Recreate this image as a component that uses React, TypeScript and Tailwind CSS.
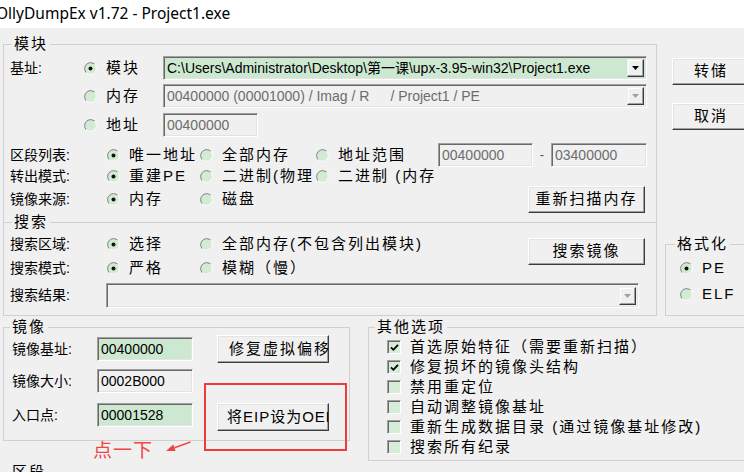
import React from 'react';

const font = "font-['Liberation_Sans','Noto_Sans_CJK_SC',sans-serif]";

function Radio({ on }: { on?: boolean }) {
  return (
    <svg width="13" height="13" viewBox="0 0 13 13" className="shrink-0">
      <circle cx="6.5" cy="6.5" r="6" fill="#d3ead3" />
      <path d="M2.26 10.74A6 6 0 0 1 10.74 2.26" fill="none" stroke="#808080" />
      <path d="M10.74 2.26A6 6 0 0 1 2.26 10.74" fill="none" stroke="#ffffff" />
      {on && <circle cx="6.5" cy="6.5" r="2" fill="#111" />}
    </svg>
  );
}

function Check({ on }: { on?: boolean }) {
  return (
    <span className="w-[14px] h-[14px] shrink-0 bg-[#d6ecd6] border border-t-[#a0a0a0] border-l-[#a0a0a0] border-r-white border-b-white shadow-[inset_1px_1px_0_#696969] flex items-center justify-center">
      {on && (
        <svg width="9" height="9" viewBox="0 0 9 9">
          <path d="M1 4.3L3.4 6.8L8 1.8" stroke="#000" strokeWidth="1.8" fill="none" />
        </svg>
      )}
    </span>
  );
}

function Group({ title, ml = 'ml-[8px]', className = '', children }: { title: string; ml?: string; className?: string; children?: React.ReactNode }) {
  return (
    <div className={`border border-[#d0d0d0] flex flex-col shrink-0 ${className}`}>
      <div className="h-0 flex">
        <span className={`${ml} -mt-[10px] h-[18px] px-[2px] bg-[#f0f0f0] text-[15px] leading-[18px] tracking-[2px]`}>{title}</span>
      </div>
      {children}
    </div>
  );
}

function Btn({ className = '', left, children }: { className?: string; left?: boolean; children: React.ReactNode }) {
  return (
    <div
      className={`flex items-center shrink-0 bg-[#f0f0f0] border border-t-white border-l-white border-r-[#3c3c3c] border-b-[#3c3c3c] shadow-[inset_-1px_-1px_0_#a0a0a0,inset_1px_1px_0_#e3e3e3] overflow-hidden whitespace-nowrap text-[15px] tracking-[2px] ${left ? 'pl-[11px]' : 'justify-center'} ${className}`}
    >
      {children}
    </div>
  );
}

function Field({ className = '', bg = 'bg-[#f0f0f0]', gray, children }: { className?: string; bg?: string; gray?: boolean; children?: React.ReactNode }) {
  return (
    <div
      className={`flex items-center shrink-0 border border-t-[#a0a0a0] border-l-[#a0a0a0] border-b-white border-r-white shadow-[inset_1px_1px_0_#696969,inset_-1px_-1px_0_#e3e3e3] pl-[3px] text-[14px] whitespace-nowrap overflow-hidden ${bg} ${gray ? 'text-[#6d6d6d]' : 'text-black'} ${className}`}
    >
      {children}
    </div>
  );
}

function DropBtn({ disabled }: { disabled?: boolean }) {
  return (
    <span className="ml-auto mr-[2px] w-[17px] h-[18px] shrink-0 flex items-center justify-center bg-[#f0f0f0] border border-t-[#f0f0f0] border-l-[#f0f0f0] border-r-[#3c3c3c] border-b-[#3c3c3c] shadow-[inset_-1px_-1px_0_#a0a0a0,inset_1px_1px_0_#fff]">
      <svg width="7" height="4" viewBox="0 0 7 4">
        <path d="M0 0H7L3.5 4Z" fill={disabled ? '#a0a0a0' : '#000'} />
      </svg>
    </span>
  );
}

function RadioItem({ on, w, children }: { on?: boolean; w: string; children: React.ReactNode }) {
  return (
    <div className={`flex items-center shrink-0 overflow-hidden whitespace-nowrap ${w}`}>
      <Radio on={on} />
      <span className="ml-[9px] text-[15px] tracking-[2px]">{children}</span>
    </div>
  );
}

function Label({ w, children }: { w: string; children: React.ReactNode }) {
  return <span className={`shrink-0 text-[14px] whitespace-nowrap ${w}`}>{children}</span>;
}

const options = [
  { on: true, text: '首选原始特征（需要重新扫描）' },
  { on: true, text: '修复损坏的镜像头结构' },
  { on: false, text: '禁用重定位' },
  { on: false, text: '自动调整镜像基址' },
  { on: false, text: '重新生成数据目录 (通过镜像基址修改)' },
  { on: false, text: '搜索所有纪录' },
];

export default function App() {
  return (
    <div className={`w-[744px] h-[472px] overflow-hidden bg-[#f0f0f0] text-black ${font}`}>
      <div className="h-[28px] bg-white flex items-center">
        <span className="-ml-[4px] text-[15.5px] font-['Noto_Sans',sans-serif]">OllyDumpEx v1.72 - Project1.exe</span>
      </div>

      <div className="pl-[3px] pt-[16px]">
        <div className="flex">
          <div className="w-[654px] shrink-0 flex flex-col">
            <Group title="模块" className="h-[178px] border-b-0">
              <div className="flex items-center h-[24px] mt-[11px] pl-[6px]">
                <Label w="w-[74px]">基址:</Label>
                <RadioItem on w="w-[79px]">模块</RadioItem>
                <Field bg="bg-[#cde8d0]" className="w-[484px] h-[24px]">
                  <span>C:\Users\Administrator\Desktop\第一课\upx-3.95-win32\Project1.exe</span>
                  <DropBtn />
                </Field>
              </div>
              <div className="flex items-center h-[24px] mt-[4px] pl-[6px]">
                <Label w="w-[74px]">{''}</Label>
                <RadioItem w="w-[79px]">内存</RadioItem>
                <Field gray className="w-[484px] h-[24px]">
                  <span>00400000 (00001000) / Imag / R</span>
                  <span className="ml-[21px]">/ Project1 / PE</span>
                  <DropBtn disabled />
                </Field>
              </div>
              <div className="flex items-center h-[24px] mt-[5px] pl-[6px]">
                <Label w="w-[74px]">{''}</Label>
                <RadioItem w="w-[79px]">地址</RadioItem>
                <Field gray className="w-[95px] h-[24px]">00400000</Field>
              </div>
              <div className="flex items-center h-[24px] mt-[6px] pl-[6px]">
                <Label w="w-[97px]">区段列表:</Label>
                <RadioItem on w="w-[93px]">唯一地址</RadioItem>
                <RadioItem w="w-[116px]">全部内存</RadioItem>
                <RadioItem w="w-[122px]">地址范围</RadioItem>
                <Field gray className="w-[95px] h-[24px]">00400000</Field>
                <span className="w-[18px] text-center text-[13px] text-[#555]">-</span>
                <Field gray className="w-[96px] h-[24px]">03400000</Field>
              </div>
              <div className="flex items-center h-[18px] pl-[6px]">
                <Label w="w-[97px]">转出模式:</Label>
                <RadioItem on w="w-[93px]">重建PE</RadioItem>
                <RadioItem w="w-[116px]">二进制(物理</RadioItem>
                <RadioItem w="w-[122px]">二进制 (内存</RadioItem>
              </div>
              <div className="flex items-center h-[28px] pl-[6px] pr-[11px]">
                <Label w="w-[97px]">镜像来源:</Label>
                <RadioItem on w="w-[93px]">内存</RadioItem>
                <RadioItem w="w-[116px]">磁盘</RadioItem>
                <Btn className="ml-auto w-[117px] h-[27px]">重新扫描内存</Btn>
              </div>
            </Group>

            <Group title="搜索">
              <div className="flex items-center h-[22px] mt-[10px] pl-[6px] pr-[11px]">
                <Label w="w-[97px]">搜索区域:</Label>
                <RadioItem on w="w-[93px]">选择</RadioItem>
                <RadioItem w="w-[232px]">全部内存(不包含列出模块)</RadioItem>
                <Btn className="ml-auto self-start mt-[5px] w-[117px] h-[27px]">搜索镜像</Btn>
              </div>
              <div className="flex items-center h-[22px] mt-[2px] pl-[6px]">
                <Label w="w-[97px]">搜索模式:</Label>
                <RadioItem on w="w-[93px]">严格</RadioItem>
                <RadioItem w="w-[160px]">模糊（慢）</RadioItem>
              </div>
              <div className="flex items-center h-[25px] mt-[4px] mb-[7px] pl-[6px]">
                <Label w="w-[96px]">搜索结果:</Label>
                <Field className="w-[533px] h-[25px]">
                  <DropBtn disabled />
                </Field>
              </div>
            </Group>
          </div>

          <div className="ml-[8px] flex flex-col shrink-0">
            <Btn className="ml-[7px] mt-[14px] w-[78px] h-[27px]">转储</Btn>
            <Btn className="ml-[7px] mt-[18px] w-[78px] h-[27px]">取消</Btn>
            <Group title="格式化" ml="ml-[9px]" className="mt-[114px] w-[110px] h-[72px]">
              <div className="flex items-center h-[20px] mt-[13px] pl-[14px]">
                <RadioItem on w="w-[80px]">PE</RadioItem>
              </div>
              <div className="flex items-center h-[20px] mt-[6px] pl-[14px]">
                <RadioItem w="w-[80px]">ELF</RadioItem>
              </div>
            </Group>
          </div>
        </div>

        <div className="relative flex items-start mt-[11px]">
          <Group title="镜像" ml="ml-[6px]" className="w-[347px] h-[114px]">
            <div className="flex items-center h-[28px] mt-[7px] pl-[8px]">
              <Label w="w-[85px]">镜像基址:</Label>
              <Field bg="bg-[#cde8d0]" className="w-[96px] h-[24px]">00400000</Field>
              <Btn left className="ml-[24px] w-[112px] h-[28px]">修复虚拟偏移</Btn>
            </div>
            <div className="flex items-center h-[24px] mt-[6px] pl-[8px]">
              <Label w="w-[85px]">镜像大小:</Label>
              <Field className="w-[96px] h-[24px]">0002B000</Field>
            </div>
            <div className="flex items-start h-[28px] mt-[10px] pl-[8px]">
              <div className="h-[24px] flex items-center">
                <Label w="w-[85px]">入口点:</Label>
              </div>
              <Field bg="bg-[#cde8d0]" className="w-[96px] h-[24px]">00001528</Field>
              <Btn left className="ml-[24px] w-[112px] h-[28px] !pl-[9px] !tracking-[1px]">将EIP设为OEP</Btn>
            </div>
          </Group>

          <Group title="其他选项" ml="ml-[6px]" className="ml-[18px] w-[400px] h-[134px]">
            <div className="flex flex-col mt-[9px] pl-[18px]">
              {options.map((o) => (
                <div key={o.text} className="flex items-center h-[20px]">
                  <Check on={o.on} />
                  <span className="ml-[9px] text-[15px] tracking-[2px] whitespace-nowrap">{o.text}</span>
                </div>
              ))}
            </div>
          </Group>

          <div className="absolute left-[201px] top-[56px] w-[143px] h-[68px] border-2 border-[#ee3b3b]" />
          <span className="absolute left-[90px] top-[113px] text-[19px] leading-[22px] tracking-[1px] text-[#f04545]">点一下</span>
          <svg className="absolute left-[160px] top-[111px]" width="30" height="16" viewBox="0 0 30 16">
            <path d="M11.4 9.8L27.5 4" stroke="#f04545" strokeWidth="1.5" fill="none" />
            <path d="M3 13L10.2 6.5L12.6 13.1Z" fill="#f04545" />
          </svg>
        </div>

        <Group title="区段" ml="ml-[6px]" className="mt-[11px] w-[800px] h-[100px]" />
      </div>
    </div>
  );
}
